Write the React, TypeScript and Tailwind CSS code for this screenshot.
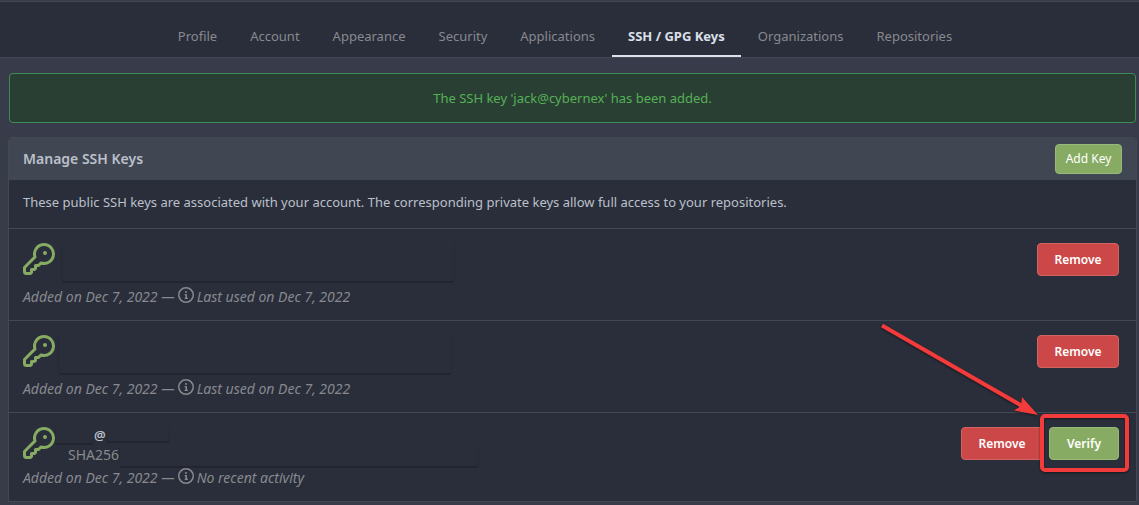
import type { ReactNode } from "react";

const tabs = [
  "Profile",
  "Account",
  "Appearance",
  "Security",
  "Applications",
  "SSH / GPG Keys",
  "Organizations",
  "Repositories",
];

const mask = "rounded-b-[4px] border-x border-b-2 border-b-[#222530] border-x-[#262a35] bg-[#2a2e3a]";

function KeyIcon() {
  return (
    <svg viewBox="0 0 16 16" className="size-8 shrink-0 fill-[#87ab63]" aria-hidden="true">
      <path d="M10.5 0a5.499 5.499 0 1 1-1.288 10.848l-.932.932a.749.749 0 0 1-.53.22H7v.75a.749.749 0 0 1-.22.53l-.5.5a.749.749 0 0 1-.53.22H5v.75a.749.749 0 0 1-.22.53l-.5.5a.749.749 0 0 1-.53.22h-2A1.75 1.75 0 0 1 0 14.25v-2c0-.199.079-.389.22-.53l4.932-4.932A5.5 5.5 0 0 1 10.5 0Zm-4 5.5c-.001.431.069.86.205 1.269a.75.75 0 0 1-.181.768L1.5 12.56v1.69c0 .138.112.25.25.25h1.69l.06-.06v-1.19a.75.75 0 0 1 .75-.75h1.19l.06-.06v-1.19a.75.75 0 0 1 .75-.75h1.19l1.023-1.025a.75.75 0 0 1 .768-.18A4 4 0 1 0 6.5 5.5ZM11 6a1 1 0 1 1 0-2 1 1 0 0 1 0 2Z" />
    </svg>
  );
}

function InfoIcon() {
  return (
    <svg viewBox="0 0 16 16" className="mb-1 size-4 shrink-0 fill-current" aria-hidden="true">
      <path d="M0 8a8 8 0 1 1 16 0A8 8 0 0 1 0 8Zm8-6.5a6.5 6.5 0 1 0 0 13 6.5 6.5 0 0 0 0-13ZM6.5 7.75A.75.75 0 0 1 7.25 7h1a.75.75 0 0 1 .75.75v2.75h.25a.75.75 0 0 1 0 1.5h-2a.75.75 0 0 1 0-1.5h.25v-2h-.25a.75.75 0 0 1-.75-.75ZM8 6a1 1 0 1 1 0-2 1 1 0 0 1 0 2Z" />
    </svg>
  );
}

function RemoveButton() {
  return (
    <button
      type="button"
      className="h-[33px] w-[82px] rounded-[4px] border border-[#d46464] bg-[#cc4848] text-[12px] font-semibold text-white"
    >
      Remove
    </button>
  );
}

function Callout() {
  return (
    <svg
      viewBox="0 0 260 160"
      className="pointer-events-none absolute -top-[109px] -left-[174px] h-[160px] w-[260px] max-w-none drop-shadow-[0_1px_1px_rgba(0,0,0,0.5)]"
      aria-hidden="true"
    >
      <path d="M7 7.5 148 88.500" stroke="#f43b3b" strokeWidth="4" />
      <path d="M163 97 139 92.500 146 88 147 79Z" fill="#f43b3b" />
      <rect x="167" y="98" width="85" height="54" rx="3" fill="none" stroke="#f43b3b" strokeWidth="4" />
    </svg>
  );
}

function KeyRow({ title, usage, actions }: { title: ReactNode; usage: string; actions: ReactNode }) {
  return (
    <li className="flex items-start justify-between border-t border-[#444853] pt-[14px] pr-[17px] pb-[13px] pl-[14px]">
      <div className="flex flex-col">
        <div className="flex">
          <KeyIcon />
          {title}
        </div>
        <p className="flex h-5 items-center gap-[3px] text-[14px] text-[#87898f] italic">
          <span>Added on Dec 7, 2022 —</span>
          <InfoIcon />
          <span>{usage}</span>
        </p>
      </div>
      <div className="flex gap-[6px]">{actions}</div>
    </li>
  );
}

export default function App() {
  return (
    <div className="flow-root min-h-screen bg-[#383c4a] font-['Noto_Sans',sans-serif] text-[13px] leading-5 text-[#bbc0ca]">
      <nav className="mt-px flex justify-center gap-px border-y border-[#444853] bg-[#2a2e3a] pt-[14px] pr-[9px]">
        {tabs.map((tab) => (
          <a
            key={tab}
            href="#"
            className={
              tab === "SSH / GPG Keys"
                ? "border-b-2 border-[#dbe0ea] px-4 pt-[10px] pb-[9px] font-bold text-[#dbe0ea]"
                : "border-b-2 border-transparent px-4 pt-[10px] pb-[9px] text-[#87898f]"
            }
          >
            {tab}
          </a>
        ))}
      </nav>
      <main className="pr-[2px] pl-2">
        <div className="mt-[15px] mr-px ml-px rounded-[4px] border border-[#408a55] bg-[#293f34] py-[14px] text-center text-[#56b154]">
          The SSH key 'jack@cybernex' has been added.
        </div>
        <section className="mt-[14px] rounded-t-[4px] border border-[#444853] bg-[#2a2e3a]">
          <header className="flex items-center justify-between rounded-t-[3px] bg-[#404652] px-[14px] py-[6px]">
            <h1 className="text-[14px] font-semibold">Manage SSH Keys</h1>
            <button
              type="button"
              className="h-[30px] w-[67px] rounded-[4px] border border-[#98b97a] bg-[#87ab63] text-[12px] text-white"
            >
              Add Key
            </button>
          </header>
          <p className="px-[14px] pt-3 pb-4">
            These public SSH keys are associated with your account. The corresponding private keys allow full access to
            your repositories.
          </p>
          <ul>
            <KeyRow
              title={<div className={`mb-1 ml-[6px] h-10 w-[394px] ${mask}`} />}
              usage="Last used on Dec 7, 2022"
              actions={<RemoveButton />}
            />
            <KeyRow
              title={<div className={`mb-1 ml-[3px] h-10 w-[394px] ${mask}`} />}
              usage="Last used on Dec 7, 2022"
              actions={<RemoveButton />}
            />
            <KeyRow
              title={
                <div>
                  <div className="flex h-[18px] items-start">
                    <div className={`h-[18px] w-[39px] ${mask}`} />
                    <strong className="text-[13px] leading-4 font-semibold">@</strong>
                    <div className={`h-4 w-[64px] ${mask}`} />
                  </div>
                  <div className="flex h-[23px] items-start pl-[13px]">
                    <span className="text-[14px] text-[#87898f]">SHA256</span>
                    <div className={`h-[23px] w-[360px] ${mask}`} />
                  </div>
                </div>
              }
              usage="No recent activity"
              actions={
                <>
                  <RemoveButton />
                  <div className="relative">
                    <button
                      type="button"
                      className="h-[33px] w-[70px] rounded-[4px] border border-[#98b97a] bg-[#87ab63] text-[12px] font-semibold text-white"
                    >
                      Verify
                    </button>
                    <Callout />
                  </div>
                </>
              }
            />
          </ul>
        </section>
      </main>
    </div>
  );
}
